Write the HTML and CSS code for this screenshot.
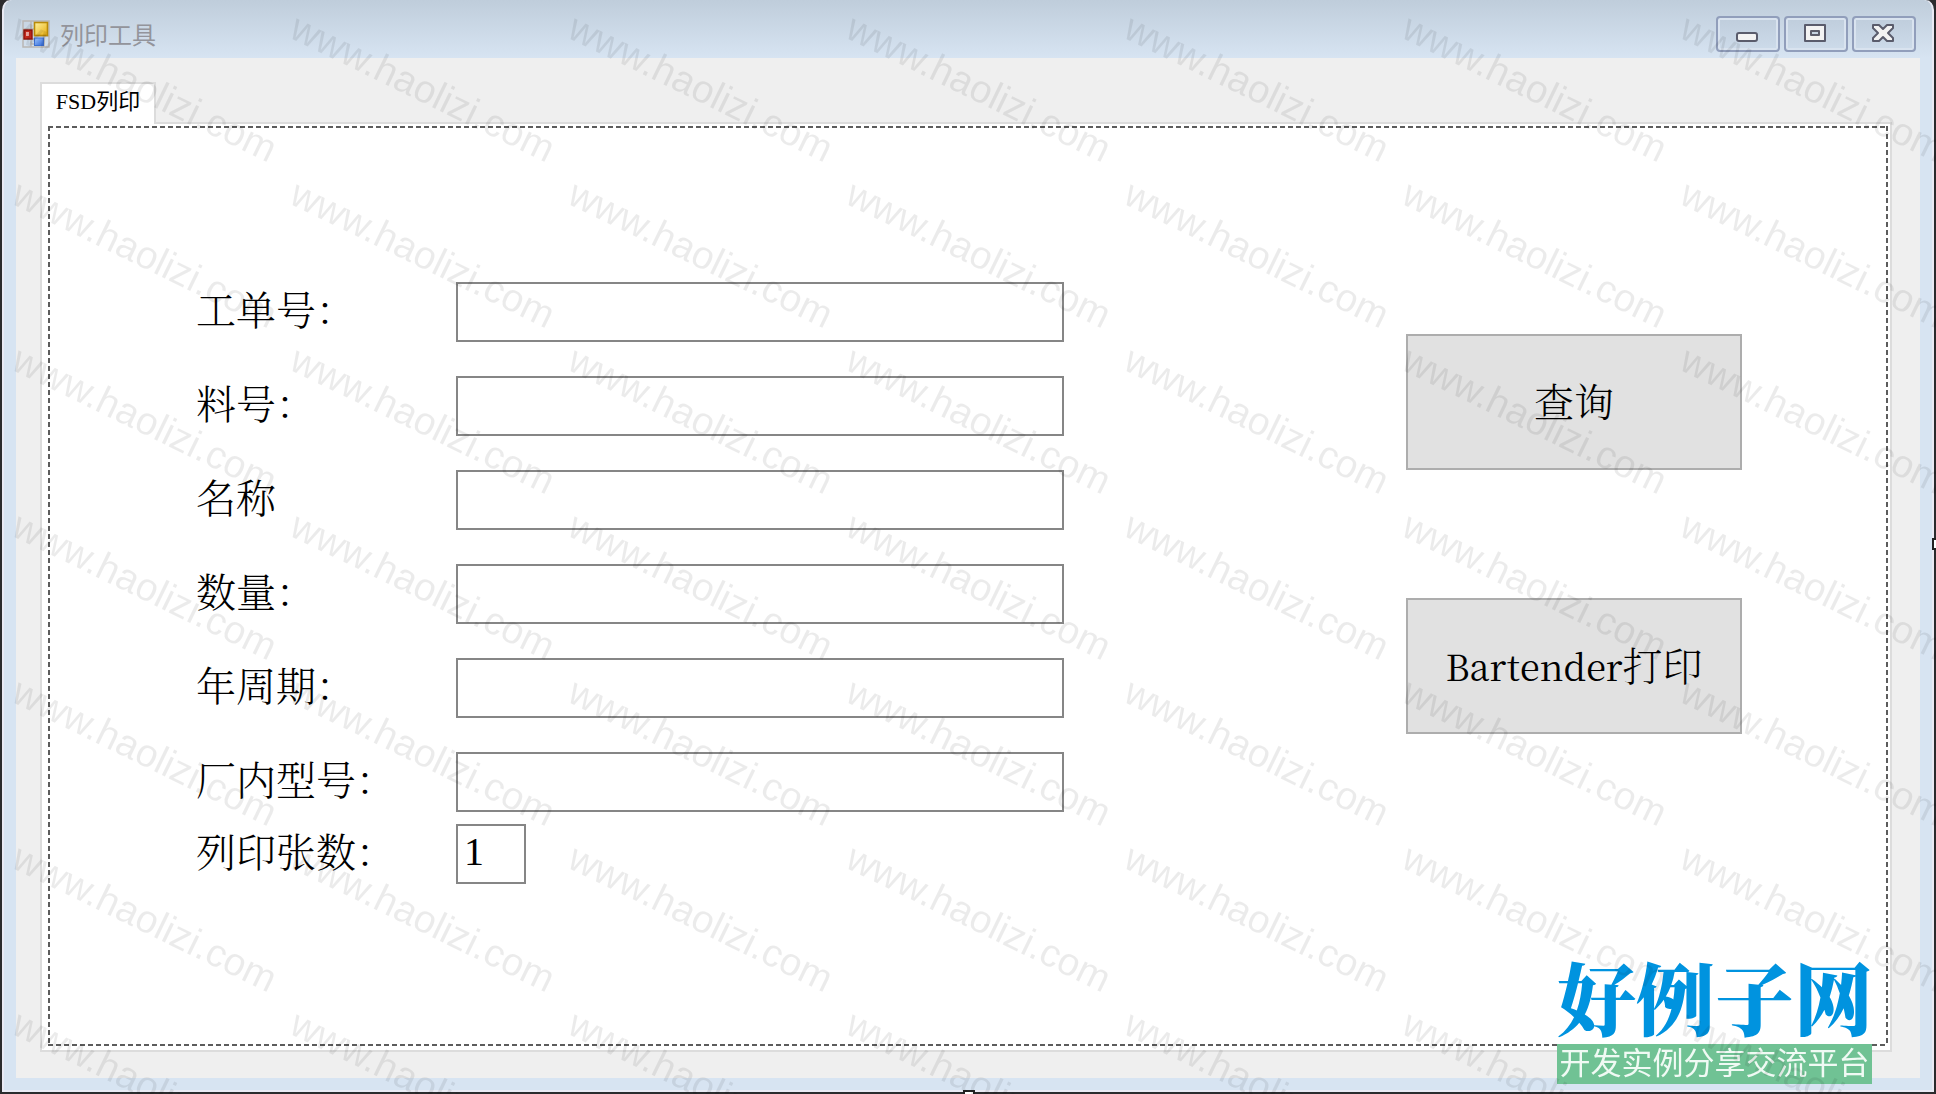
FILE: index.html
```html
<!DOCTYPE html>
<html lang="zh-CN">
<head>
    <meta charset="UTF-8">
    <meta name="viewport" content="width=device-width, initial-scale=1.0">
    <title>列印工具</title>
    <link rel="stylesheet" href="styles.css">
</head>
<body>
    <div class="window">
        <header class="titlebar">
            <svg class="app-icon" width="28" height="28" viewBox="0 0 28 28" aria-hidden="true">
                <defs>
                    <linearGradient id="yellow" x1="0" y1="0" x2="1" y2="1">
                        <stop offset="0" stop-color="#fff3a0"/>
                        <stop offset="1" stop-color="#e8ae10"/>
                    </linearGradient>
                    <linearGradient id="blue" x1="0" y1="0" x2="1" y2="1">
                        <stop offset="0" stop-color="#9cc4fa"/>
                        <stop offset="1" stop-color="#2f66d8"/>
                    </linearGradient>
                </defs>
                <path d="M1 1h26v26H1zM1 9h11M9 1v26M1 19h11M12 16h15M22 16v11M9 24h3" fill="none" stroke="#b9b6b4" stroke-width="1.5"/>
                <rect x="12.5" y="2.5" width="13" height="13" fill="url(#yellow)" stroke="#b98a08" stroke-width="1.6"/>
                <rect x="2" y="10" width="8" height="9" fill="#c5281c" stroke="#8f130c" stroke-width="1.4"/>
                <rect x="4" y="12" width="3" height="4" fill="#e9a39c"/>
                <rect x="12.5" y="18" width="9" height="7.5" fill="url(#blue)" stroke="#3c6fd0"/>
            </svg>
            <h1>列印工具</h1>
            <div class="window-buttons">
                <button type="button" aria-label="最小化">
                    <svg width="24" height="20" viewBox="0 0 24 20"><rect x="1" y="9" width="20" height="8" rx="2" fill="#f3f3f3" stroke="#5a5c6c" stroke-width="2"/></svg>
                </button>
                <button type="button" aria-label="最大化">
                    <svg width="24" height="20" viewBox="0 0 24 20"><path d="M1 1h20v16H1zM7 7v4h8V7z" fill="#f3f3f3" fill-rule="evenodd" stroke="#5a5c6c" stroke-width="2" stroke-linejoin="round"/></svg>
                </button>
                <button type="button" aria-label="关闭">
                    <svg width="24" height="20" viewBox="0 0 24 20"><path d="M1 1h6l4 4 4-4h6v3l-5 5 5 5v3h-6l-4-4-4 4H1v-3l5-5-5-5z" fill="#f3f3f3" stroke="#5a5c6c" stroke-width="2" stroke-linejoin="round"/></svg>
                </button>
            </div>
        </header>
        <main class="client">
            <div class="tabs" role="tablist">
                <button type="button" class="tab" role="tab" aria-selected="true">FSD列印</button>
            </div>
            <div class="tab-page">
                <form class="page-content">
                    <div class="fields">
                        <label for="order">工单号：</label>
                        <input type="text" id="order" name="order">

                        <label for="part">料号：</label>
                        <input type="text" id="part" name="part">

                        <label for="name">名称</label>
                        <input type="text" id="name" name="name">

                        <label for="quantity">数量：</label>
                        <input type="text" id="quantity" name="quantity">

                        <label for="cycle">年周期：</label>
                        <input type="text" id="cycle" name="cycle">

                        <label for="model">厂内型号：</label>
                        <input type="text" id="model" name="model">
                    </div>
                    <div class="fields copies">
                        <label for="copies">列印张数：</label>
                        <input type="text" id="copies" name="copies" value="1">
                    </div>
                    <div class="actions">
                        <button type="button">查询</button>
                        <button type="button"><span class="latin">Bartender</span>打印</button>
                    </div>
                </form>
            </div>
        </main>
    </div>

    <div class="handle handle-right"></div>
    <div class="handle handle-bottom"></div>

    <div class="logo">
        <strong>好例子网</strong>
        <span>开发实例分享交流平台</span>
    </div>

    <div class="watermark" aria-hidden="true"></div>
    <script src="watermark.js"></script>
</body>
</html>
```
FILE: watermark.js
```js
const watermark = document.querySelector('.watermark');
for (let i = 0; i < 49; i++) {
    const mark = document.createElement('span');
    mark.textContent = 'www.haolizi.com';
    watermark.appendChild(mark);
}
```
FILE: styles.css
```css
* {
    box-sizing: border-box;
}
body {
    margin: 0;
    background: #2b2b2d;
    color: #000;
    font-family: "Noto Serif CJK SC", "Noto Sans CJK SC", serif;
    overflow: hidden;
}
.window {
    display: flex;
    flex-direction: column;
    height: 100vh;
    padding: 0 14px 14px;
    border: 2px solid #2b2b2d;
    border-top: 0;
    border-radius: 10px 10px 0 0;
    background: linear-gradient(#bfcddb, #d7e4f2 58px);
    box-shadow: inset 2px 0 #e9eaf4, inset -2px 0 #e9eaf4, inset 0 -2px #e9eaf4;
}

/* Title bar */
.titlebar {
    display: flex;
    align-items: center;
    flex: none;
    height: 58px;
    padding: 10px 4px 0 6px;
}
.titlebar h1 {
    flex: 1;
    margin: 0 0 0 10px;
    color: #93949b;
    font-family: "Noto Sans CJK SC", sans-serif;
    font-size: 24px;
    font-weight: 400;
    line-height: 32px;
}
.window-buttons {
    display: flex;
    gap: 4px;
}
.window-buttons button {
    display: flex;
    align-items: center;
    justify-content: center;
    width: 64px;
    height: 36px;
    padding: 0;
    border: 2px solid #919ebb;
    border-radius: 4px;
    background: linear-gradient(#bfcddc, #cddbea);
    box-shadow: inset 0 0 0 2px #d9e3ef;
}

/* Tab control */
.client {
    display: flex;
    flex-direction: column;
    flex: 1;
    padding: 24px 28px 26px 24px;
    background: #efefef;
}
.tab {
    display: block;
    width: 116px;
    height: 42px;
    margin-bottom: -2px;
    padding: 0 0 4px;
    position: relative;
    border: 2px solid #dcdcdc;
    border-bottom: 0;
    background: #fff;
    color: #000;
    font-family: "Liberation Serif", "Noto Sans CJK SC", serif;
    font-size: 22px;
    line-height: 32px;
}
.tab-page {
    display: flex;
    flex: 1;
    padding: 2px 2px 4px 6px;
    border: 2px solid #dcdcdc;
    background: #fff;
}
.page-content {
    display: grid;
    grid-template-columns: 868px 336px;
    grid-template-rows: auto auto;
    justify-content: space-between;
    align-content: start;
    row-gap: 12px;
    flex: 1;
    padding: 156px 146px 0 148px;
    background:
        repeating-linear-gradient(90deg, #5c5c5c 0 5px, transparent 5px 8px) top / 100% 2px no-repeat,
        repeating-linear-gradient(90deg, #5c5c5c 0 5px, transparent 5px 8px) bottom / 100% 2px no-repeat,
        repeating-linear-gradient(#5c5c5c 0 5px, transparent 5px 8px) left / 2px 100% no-repeat,
        repeating-linear-gradient(#5c5c5c 0 5px, transparent 5px 8px) right / 2px 100% no-repeat;
}

/* Form */
.fields {
    display: grid;
    grid-template-columns: 260px 1fr;
    row-gap: 34px;
}
.fields label {
    font-size: 40px;
    font-weight: 300;
    line-height: 52px;
    white-space: nowrap;
}
.fields input {
    width: 100%;
    height: 60px;
    padding: 0 6px 6px;
    border: 2px solid #868686;
    border-radius: 0;
    background: transparent;
    font-family: "Liberation Serif", serif;
    font-size: 40px;
}
.copies input {
    width: 70px;
}
.actions {
    display: flex;
    flex-direction: column;
    gap: 128px;
    grid-column: 2;
    grid-row: 1 / 3;
    padding-top: 52px;
}
.actions button {
    height: 136px;
    padding: 0 0 6px;
    border: 2px solid #adadad;
    background: #e1e1e1;
    color: #000;
    font-family: "Noto Serif CJK SC", "Noto Sans CJK SC", serif;
    font-size: 40px;
    font-weight: 300;
}
.latin {
    font-size: 36px;
    font-weight: 400;
}

/* Resize handles on the window edge */
.handle {
    position: fixed;
    border: 2px solid #222;
    background: #fff;
}
.handle-right {
    top: 538px;
    right: -6px;
    width: 10px;
    height: 12px;
}
.handle-bottom {
    bottom: -6px;
    left: 50%;
    width: 12px;
    height: 10px;
    margin-left: -5px;
}

/* Site logo */
.logo {
    display: flex;
    flex-direction: column;
    position: fixed;
    right: 64px;
    bottom: 10px;
    width: 315px;
    font-family: "Noto Sans CJK SC", sans-serif;
    white-space: nowrap;
}
.logo strong {
    color: #0093df;
    font-family: "Noto Serif CJK SC", "Noto Sans CJK SC", serif;
    font-size: 79px;
    font-weight: 900;
    line-height: 96px;
}
.logo span {
    height: 40px;
    background: #70c294;
    color: #f0faf4;
    font-size: 31px;
    line-height: 34px;
    text-align: center;
}

/* Repeated site address over the whole window */
.watermark {
    display: grid;
    grid-template-columns: repeat(7, 278px);
    grid-auto-rows: 166px;
    position: fixed;
    inset: 0;
    padding: 7px 0 0 24px;
    overflow: hidden;
    pointer-events: none;
}
.watermark span {
    color: rgba(0, 0, 0, 0.08);
    font-family: "Liberation Sans", Arial, sans-serif;
    font-size: 39px;
    line-height: 40px;
    transform: rotate(26deg);
    transform-origin: 0 0;
    white-space: nowrap;
    width: max-content;
    height: 40px;
}
```
